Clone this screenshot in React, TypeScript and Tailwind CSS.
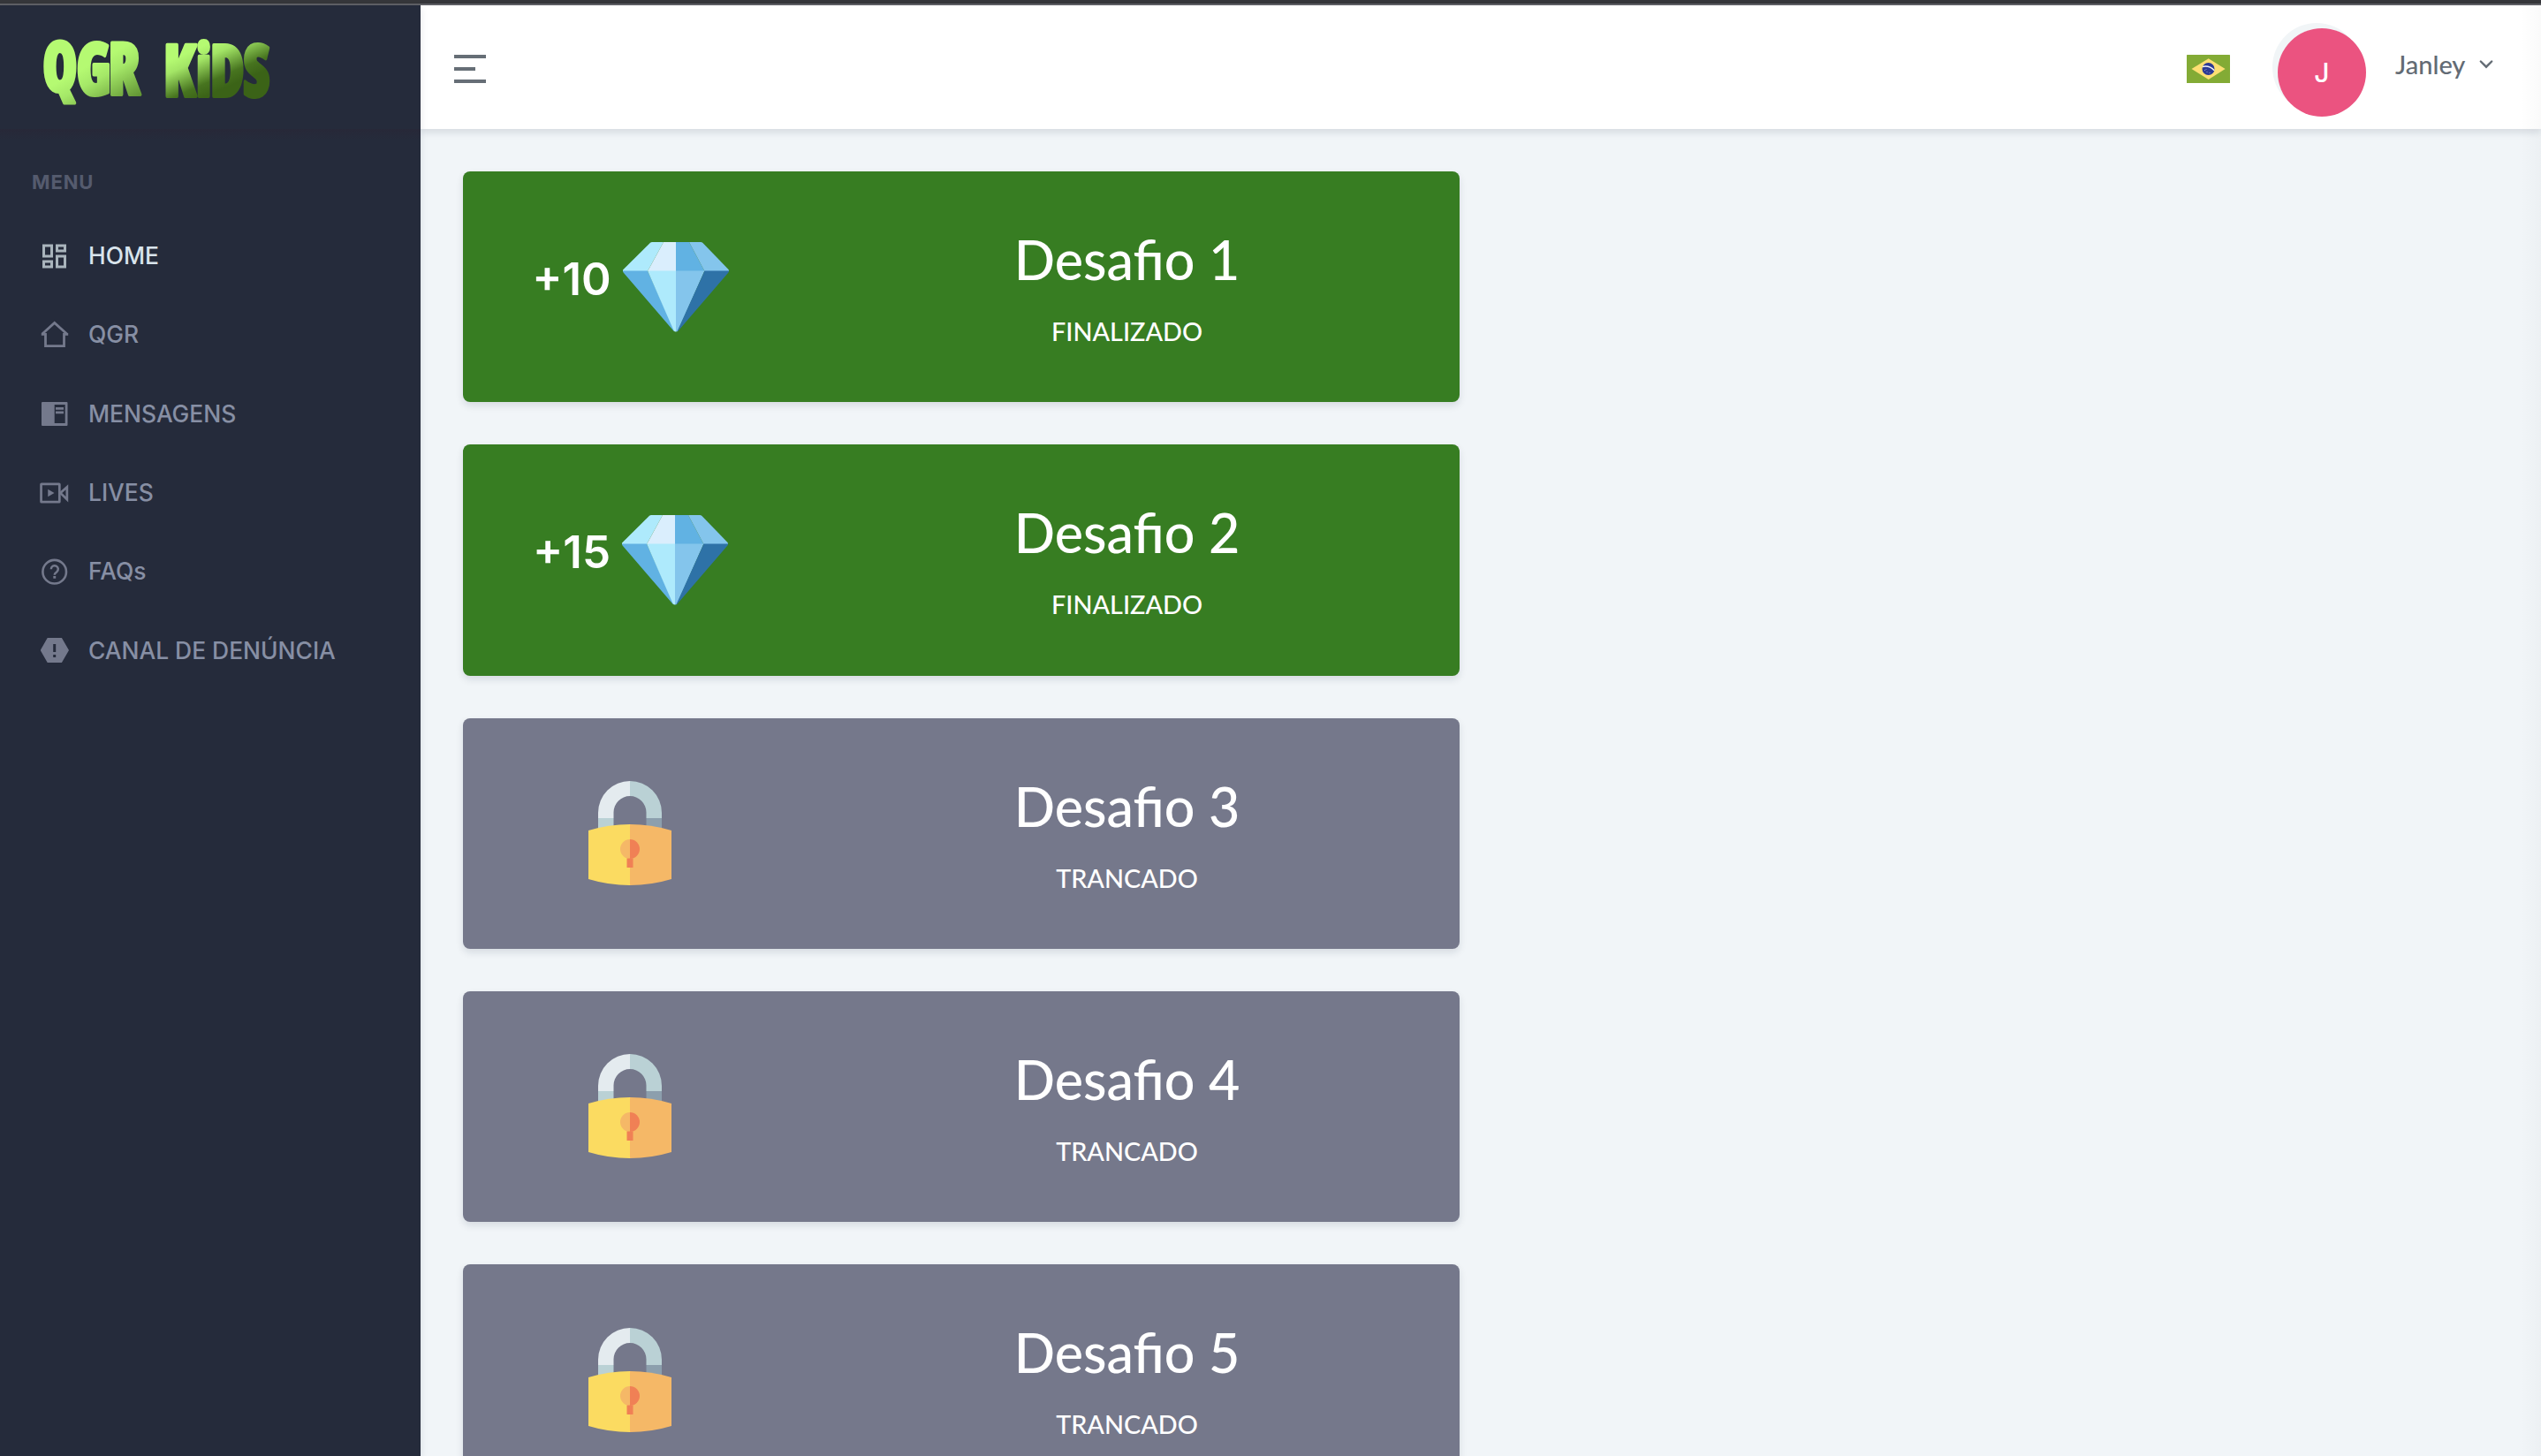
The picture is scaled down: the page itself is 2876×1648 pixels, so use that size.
import React from "react";

function Logo() {
  return (
    <svg width="300" height="128" viewBox="0 -32 300 128" className="overflow-visible" aria-label="QGR KiDS">
      <defs>
        <linearGradient id="logoLeft" gradientUnits="userSpaceOnUse" x1="73" y1="25" x2="103" y2="95">
          <stop offset="0" stopColor="#b5fa72" />
          <stop offset="0.25" stopColor="#a5e868" />
          <stop offset="1" stopColor="#47741f" />
        </linearGradient>
        <linearGradient id="logoRight" gradientUnits="userSpaceOnUse" x1="215" y1="10" x2="233" y2="62">
          <stop offset="0" stopColor="#b5fa72" />
          <stop offset="0.25" stopColor="#a3e566" />
          <stop offset="0.75" stopColor="#47741f" />
          <stop offset="1" stopColor="#3b6317" />
        </linearGradient>
      </defs>
      <g
        className="[font-stretch:75%]"
        transform="scale(0.8 1)"
        fontFamily="'Open Sans', sans-serif"
        fontWeight="800"
        fontSize="82"
        strokeWidth="4"
        strokeLinejoin="round"
      >
        <text x="3 51 96" y="60" fill="url(#logoLeft)" stroke="url(#logoLeft)">
          <tspan fontSize="78" dy="-4">Q</tspan>
          <tspan dy="4">GR</tspan>
        </text>
        <text x="174 220 240 287" y="62" fill="url(#logoRight)" stroke="url(#logoRight)">KiDS</text>
      </g>
    </svg>
  );
}

function HomeGridIcon() {
  return (
    <svg width="32" height="32" viewBox="0 0 32 32" fill="none" stroke="currentColor" strokeWidth="3">
      <path d="M3.5 4h9v12h-9zM3.5 22h9v6h-9zM18.500 4h9v6h-9zM18.500 16h9v12h-9z" />
    </svg>
  );
}

function HouseIcon() {
  return (
    <svg width="32" height="32" viewBox="0 0 32 32" fill="none" stroke="currentColor" strokeWidth="2.8">
      <path d="M.8 15.300H5.500V28.700H26.500V15.300H31.200M1.500 15.200L15.700 2.400L30 15.200" />
    </svg>
  );
}

function ReaderIcon() {
  return (
    <svg width="32" height="32" viewBox="0 0 32 32" fill="currentColor">
      <path
        fillRule="evenodd"
        d="M2 3h27.500a1 1 0 0 1 1 1v25a1 1 0 0 1-1 1H2a1 1 0 0 1-1-1V4a1 1 0 0 1 1-1zM15.700 6v21h12V6z"
      />
      <path d="M17 9h9v2.700h-9zM17 13.500h9v2.700h-9z" />
    </svg>
  );
}

function VideoIcon() {
  return (
    <svg width="34" height="32" viewBox="0 0 34 32" className="-ml-px" fill="none" stroke="currentColor" strokeWidth="2.8">
      <rect x="1.600" y="5.500" width="21.400" height="21" rx="0.5" />
      <path d="M24 15.900L31.800 9v14.500z" />
      <path d="M9.500 11.500v9l7.500-4.500z" fill="currentColor" stroke="none" />
    </svg>
  );
}

function QuestionIcon() {
  return (
    <svg width="32" height="32" viewBox="0 0 32 32" fill="none" stroke="currentColor">
      <circle cx="15.700" cy="16.200" r="13.300" strokeWidth="2.600" />
      <path d="M11.800 13.200a4 4 0 1 1 6.500 3.100c-1.600 1.200-2.600 1.700-2.600 3.500" strokeWidth="2.500" />
      <path d="M14.300 21h2.900v2.700h-2.900z" fill="currentColor" stroke="none" />
    </svg>
  );
}

function ReportIcon() {
  return (
    <svg width="32" height="32" viewBox="0 0 32 32" fill="currentColor">
      <path
        fillRule="evenodd"
        d="M7.700 2h16.200L32 16.100L23.900 30H7.700L-.3 16.100zM14.200 9v9h3V9zM14.200 21v3h3v-3z"
      />
    </svg>
  );
}

const menu = [
  { label: "HOME", Icon: HomeGridIcon, active: true },
  { label: "QGR", Icon: HouseIcon },
  { label: "MENSAGENS", Icon: ReaderIcon },
  { label: "LIVES", Icon: VideoIcon },
  { label: "FAQs", Icon: QuestionIcon },
  { label: "CANAL DE DENÚNCIA", Icon: ReportIcon },
];

function Sidebar() {
  return (
    <aside className="relative z-20 flex w-[476px] shrink-0 flex-col bg-[#252b3b] shadow-[0_4px_8px_rgba(15,34,58,0.12)]">
      <div className="h-[140px] pt-[9px] pl-[46px]">
        <Logo />
      </div>
      <div className="h-3 bg-gradient-to-b from-[#272838] to-[#252b3b]" />
      <div className="mt-[30px] pl-9 text-[22px] leading-9 font-bold tracking-[0.9px] text-[#555b6e]">MENU</div>
      <nav className="mt-[21px] flex flex-col">
        {menu.map(({ label, Icon, active }) => (
          <a
            key={label}
            className={
              active
                ? "flex h-[89.3px] items-center gap-[22px] pl-[46px] text-[#a9b4bc]"
                : "flex h-[89.3px] items-center gap-[22px] pl-[46px] text-[#74798c]"
            }
          >
            <span className="flex w-8 shrink-0">
              <Icon />
            </span>
            <span
              className={
                active
                  ? "mb-px text-[26.4px] leading-10 font-[540] whitespace-nowrap text-[#d9e4ec]"
                  : "mb-px text-[26.4px] leading-10 font-[540] whitespace-nowrap text-[#878fa4]"
              }
            >
              {label}
            </span>
          </a>
        ))}
      </nav>
    </aside>
  );
}

function BrazilFlag() {
  return (
    <svg width="49" height="32" viewBox="0 0 49 32">
      <rect width="49" height="32" rx="0.5" fill="#83ab35" />
      <path d="M5.500 16L24.700 4.200L43.600 16L24.700 28z" fill="#fcdf72" />
      <circle cx="24.500" cy="16" r="7" fill="#2c3a94" />
      <path d="M18 13.400c5-1 10 .8 13.200 4.300" fill="none" stroke="#f3f4f8" strokeWidth="1.500" />
      <g fill="#9aa2d0">
        <circle cx="20.500" cy="17.500" r="0.600" />
        <circle cx="23" cy="19.500" r="0.600" />
        <circle cx="26" cy="20.500" r="0.600" />
        <circle cx="22" cy="16.500" r="0.500" />
      </g>
    </svg>
  );
}

function Header() {
  return (
    <header className="relative z-10 flex h-[140px] items-start bg-white pl-[38px] shadow-[0_4px_8px_rgba(15,34,58,0.12)]">
      <button className="mt-14 flex flex-col gap-2.5" aria-label="Menu">
        <span className="h-1 w-9 bg-[#666e76]" />
        <span className="h-1 w-6 bg-[#666e76]" />
        <span className="h-1 w-9 bg-[#666e76]" />
      </button>
      <div className="mt-14 ml-auto">
        <BrazilFlag />
      </div>
      <div className="mt-5 ml-12 size-[100px] rounded-full bg-[#f1f5f7]">
        <div className="relative top-1.5 left-1.5 flex size-[100px] items-center justify-center rounded-full bg-[#eb5380] text-[30px] font-medium text-white">
          J
        </div>
      </div>
      <div className="mt-[46px] mr-[54px] ml-[39px] flex items-center">
        <span className="w-[80px] font-['Lato',sans-serif] text-[29px] leading-[42px] font-medium text-[#636b74]">
          Janley
        </span>
        <svg width="16" height="12" viewBox="0 0 16 12" className="ml-[15px]" fill="none" stroke="#636b74" strokeWidth="2.400">
          <path d="M1.800 2.500L8 8.700L14.200 2.500" strokeLinecap="round" />
        </svg>
      </div>
    </header>
  );
}

function Diamond() {
  return (
    <svg width="120" height="102" viewBox="0 0 120 102">
      <path d="M31 .8Q32 0 33 0H46L28 33H0V31.500z" fill="#aeeafc" />
      <path d="M46 0H60V33H28z" fill="#daeefd" />
      <path d="M60 0H75L92.500 33H60z" fill="#61b2e3" />
      <path d="M75 0H88Q89.500 0 90.500 1L120 31.500V33H92.500z" fill="#84c5ec" />
      <path d="M0 32.500H28L59 101Q57.500 101 56.500 99.500L.6 34.500Q0 33.800 0 32.500z" fill="#61b2e3" />
      <path d="M28 32.500H60V101.500Q58.500 101.500 57.500 100z" fill="#aeeafc" />
      <path d="M60 32.500H92.500L62.500 100Q61.500 101.500 60 101.500z" fill="#84c5ec" />
      <path d="M92.500 32.500H120Q120 34 119.400 34.500L63.500 99.500Q62.500 101 61.500 101z" fill="#2e72a7" />
    </svg>
  );
}

function Lock() {
  return (
    <svg width="94" height="118" viewBox="0 0 94 118" className="mr-px">
      <path d="M11 42V36A36 36 0 0 1 47 0V17A18.500 18.500 0 0 0 28.500 35.500V42z" fill="#e4ebef" />
      <path d="M83 42V36A36 36 0 0 0 47 0V17A18.500 18.500 0 0 1 65.500 35.500V42z" fill="#bad1d5" />
      <path d="M11 42H28.500V56H11z" fill="#bad1d5" />
      <path d="M65.500 42H83V56H65.500z" fill="#8c9fad" />
      <path d="M0 56Q23 49 47 49V118Q23 118 0 111z" fill="#fbdb61" />
      <path d="M94 56Q71 49 47 49V118Q71 118 94 111z" fill="#f5b867" />
      <path d="M47 66A11 11 0 0 0 47 88z" fill="#f5b867" />
      <path d="M47 66A11 11 0 0 1 47 88z" fill="#f08055" />
      <path d="M43.500 87.500H50.500V98H43.500z" fill="#f08055" />
    </svg>
  );
}

type Challenge = { title: string; status: string; reward?: string };

const challenges: Challenge[] = [
  { title: "Desafio 1", status: "FINALIZADO", reward: "+10" },
  { title: "Desafio 2", status: "FINALIZADO", reward: "+15" },
  { title: "Desafio 3", status: "TRANCADO" },
  { title: "Desafio 4", status: "TRANCADO" },
  { title: "Desafio 5", status: "TRANCADO" },
];

function ChallengeCard({ title, status, reward }: Challenge) {
  return (
    <article
      className={
        reward
          ? "grid h-[261.25px] shrink-0 grid-cols-3 rounded-lg bg-[#377d22] text-white shadow-[0_4px_8px_rgba(15,34,58,0.12)]"
          : "grid h-[261.25px] shrink-0 grid-cols-3 rounded-lg bg-[#75788b] text-white shadow-[0_4px_8px_rgba(15,34,58,0.12)]"
      }
    >
      <div className="flex items-center justify-center pl-[3px]">
        {reward ? (
          <div className="flex items-center gap-[13px]">
            <span className="mt-[-18px] text-[51px] leading-none font-semibold">{reward}</span>
            <Diamond />
          </div>
        ) : (
          <Lock />
        )}
      </div>
      <div className="col-span-2 flex flex-col items-center pr-px font-['Lato',sans-serif] font-medium">
        <h2 className="mt-[64px] text-[61px] leading-[72px] whitespace-nowrap">{title}</h2>
        <p className="mt-[25px] text-[28.8px] leading-[40px] whitespace-nowrap">{status}</p>
      </div>
    </article>
  );
}

export default function App() {
  return (
    <div className="relative flex h-[1648px] w-[2876px] flex-col overflow-hidden bg-[#f1f5f8] font-['Inter',sans-serif]">
      <div className="h-1.5 shrink-0 border-b-2 border-[#5f6065] bg-[#35363a]" />
      <div className="flex min-h-0 flex-1">
        <Sidebar />
        <div className="flex min-w-0 flex-1 flex-col">
          <Header />
          <main className="flex w-[1224px] min-h-0 flex-1 flex-col gap-12 p-12">
            {challenges.map((challenge) => (
              <ChallengeCard key={challenge.title} {...challenge} />
            ))}
          </main>
        </div>
      </div>
      <div className="pointer-events-none absolute top-1.5 right-0 bottom-0 z-30 w-6 bg-gradient-to-r from-transparent to-black/[0.02]" />
    </div>
  );
}
